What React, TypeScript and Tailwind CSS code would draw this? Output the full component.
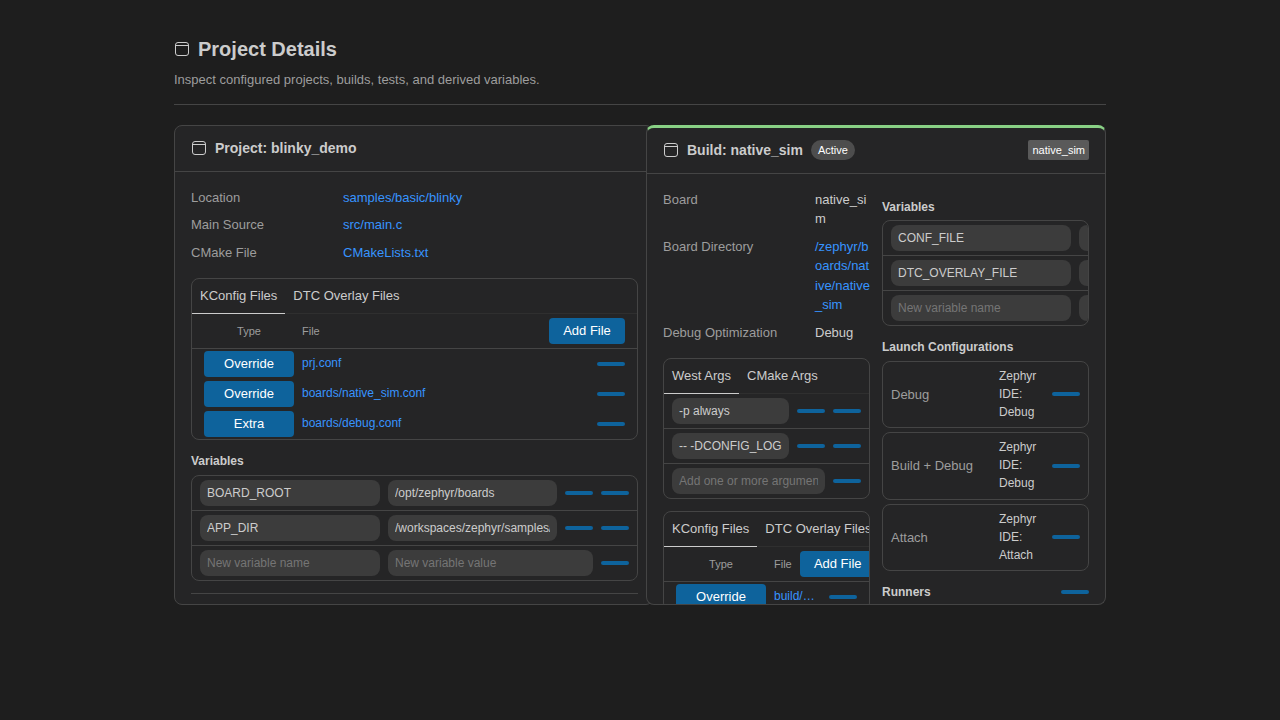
const Icon = ({ className = '' }: { className?: string }) => (
  <svg viewBox="0 0 16 16" fill="none" stroke="#cccccc" strokeWidth="1" className={`w-4 h-4 shrink-0 ${className}`}>
    <rect x="1.5" y="1.5" width="13" height="13" rx="2.5" />
    <path d="M1.5 4.5h13" />
  </svg>
);

const Dash = ({ className = '' }: { className?: string }) => (
  <button className={`block w-7 h-1 shrink-0 rounded-sm bg-[#0e639c] ${className}`} />
);

const Field = ({ value, placeholder, className = '' }: { value?: string; placeholder?: string; className?: string }) => (
  <input
    readOnly
    value={value ?? ''}
    placeholder={placeholder}
    className={`h-[26px] shrink-0 rounded-lg bg-[#3c3c3c] px-[7px] text-xs text-[#cccccc] placeholder:text-[#757575] outline-none ${className}`}
  />
);

const Heading = ({ children, className = '' }: { children: React.ReactNode; className?: string }) => (
  <div className={`text-xs font-bold leading-[18px] text-[#cccccc] ${className}`}>{children}</div>
);

const Tabs = ({ first, second }: { first: string; second: string }) => (
  <div className="flex h-[35px] border-b border-[#2f2f2f] text-[13px] text-[#cccccc] whitespace-nowrap">
    <div className="h-[35px] px-2 leading-[33px] border-b border-[#cccccc]">{first}</div>
    <div className="px-2 leading-[33px]">{second}</div>
  </div>
);

const AddFile = () => (
  <button className="h-[26px] w-[76px] shrink-0 rounded bg-[#0e639c] text-[13px] text-white">Add File</button>
);

const TypeButton = ({ children }: { children: React.ReactNode }) => (
  <button className="h-[26px] w-[90px] shrink-0 rounded bg-[#0e639c] text-[13px] text-white">{children}</button>
);

const Box = ({ children, className = '' }: { children: React.ReactNode; className?: string }) => (
  <div className={`rounded-lg border border-[#454545] overflow-hidden ${className}`}>{children}</div>
);

const Row = ({ children, last }: { children: React.ReactNode; last?: boolean }) => (
  <div className={`flex items-center gap-2 pl-2 ${last ? 'h-[34px]' : 'h-[35px] border-b border-[#454545]'}`}>{children}</div>
);

const files = ['prj.conf', 'boards/native_sim.conf', 'boards/debug.conf'];
const types = ['Override', 'Override', 'Extra'];

const launch = [
  { name: 'Debug', value: 'Zephyr IDE: Debug', nudge: 'mb-[1.5px]' },
  { name: 'Build + Debug', value: 'Zephyr IDE: Debug', nudge: 'mb-[2.5px]' },
  { name: 'Attach', value: 'Zephyr IDE: Attach', nudge: 'mb-[0.5px]' },
];

export default function App() {
  return (
    <div className="h-[720px] overflow-hidden bg-[#1e1e1e] font-['Liberation_Sans',Arial,sans-serif] text-[13px] text-[#cccccc]">
      <div className="w-[932px] ml-[174px] pt-[35px]">
        <div className="flex items-center gap-2 h-[27px]">
          <Icon />
          <h1 className="text-xl font-bold text-[#cccccc]">Project Details</h1>
        </div>
        <p className="mt-2 leading-[19.5px] text-[#9d9d9d]">Inspect configured projects, builds, tests, and derived variables.</p>
        <div className="mt-[14px] border-t border-[#454545]" />

        <div className="flex mt-5">
          {/* project card */}
          <section className="w-[480px] h-[480px] shrink-0 rounded-lg border border-[#454545] bg-[#252526] overflow-hidden">
            <header className="flex items-center gap-2 h-[46px] px-4 border-b border-[#454545]">
              <Icon />
              <h2 className="text-sm font-bold">Project: blinky_demo</h2>
            </header>
            <div className="px-4 pt-4">
              <dl className="grid grid-cols-[152px_1fr] gap-y-2 leading-[19.5px]">
                <dt className="text-[#9d9d9d]">Location</dt>
                <dd className="text-[#3794ff]">samples/basic/blinky</dd>
                <dt className="text-[#9d9d9d]">Main Source</dt>
                <dd className="text-[#3794ff]">src/main.c</dd>
                <dt className="text-[#9d9d9d]">CMake File</dt>
                <dd className="text-[#3794ff]">CMakeLists.txt</dd>
              </dl>

              <Box className="mt-4 w-[447px]">
                <Tabs first="KConfig Files" second="DTC Overlay Files" />
                <div className="flex items-center h-[35px] pl-3 pr-3 border-b border-[#454545] text-[11px] text-[#9d9d9d]">
                  <div className="w-[90px] text-center">Type</div>
                  <div className="ml-2 flex-1">File</div>
                  <AddFile />
                </div>
                <div className="flex flex-col gap-1 py-0.5 pl-3 pr-3">
                  {files.map((file, i) => (
                    <div key={file} className="flex items-center gap-2 h-[26px]">
                      <TypeButton>{types[i]}</TypeButton>
                      <a className="flex-1 text-xs text-[#3794ff] -mt-0.5">{file}</a>
                      <Dash />
                    </div>
                  ))}
                </div>
              </Box>

              <Heading className="mt-3 mb-[5px]">Variables</Heading>
              <Box className="w-[447px]">
                <Row>
                  <Field value="BOARD_ROOT" className="w-[180px]" />
                  <Field value="/opt/zephyr/boards" className="w-[169px]" />
                  <Dash />
                  <Dash />
                </Row>
                <Row>
                  <Field value="APP_DIR" className="w-[180px]" />
                  <Field value="/workspaces/zephyr/samples/basic/blinky" className="w-[169px]" />
                  <Dash />
                  <Dash />
                </Row>
                <Row last>
                  <Field placeholder="New variable name" className="w-[180px]" />
                  <Field placeholder="New variable value" className="w-[205px]" />
                  <Dash />
                </Row>
              </Box>
              <div className="mt-3 w-[447px] border-t border-[#454545]" />
            </div>
          </section>

          {/* build card */}
          <section className="relative z-10 -ml-2 w-[460px] h-[480px] shrink-0 rounded-lg border border-[#454545] border-t-[3px] border-t-[#89d185] bg-[#252526] overflow-hidden">
            <header className="flex items-center h-[46px] px-4 border-b border-[#454545]">
              <Icon />
              <h2 className="ml-2 text-sm font-bold">Build: native_sim</h2>
              <span className="ml-2 h-5 px-[7px] rounded-full bg-[#4d4d4d] text-[11px] leading-5 text-white">Active</span>
              <span className="ml-auto h-5 px-1 rounded-[2px] bg-[#5a5a5a] text-[11px] leading-5 text-white">native_sim</span>
            </header>
            <div className="grid grid-cols-[207px_207px] gap-x-3 px-4 pt-4">
              <div className="min-w-0">
                <dl className="grid grid-cols-[152px_55px] gap-y-2 leading-[19.5px]">
                  <dt className="text-[#9d9d9d]">Board</dt>
                  <dd className="break-all">native_sim</dd>
                  <dt className="text-[#9d9d9d]">Board Directory</dt>
                  <dd className="break-all text-[#3794ff]">/zephyr/boards/native/native_sim</dd>
                  <dt className="text-[#9d9d9d]">Debug Optimization</dt>
                  <dd>Debug</dd>
                </dl>

                <Box className="mt-4">
                  <Tabs first="West Args" second="CMake Args" />
                  <Row>
                    <Field value="-p always" className="w-[117px]" />
                    <Dash />
                    <Dash />
                  </Row>
                  <Row>
                    <Field value="-- -DCONFIG_LOG=y" className="w-[117px]" />
                    <Dash />
                    <Dash />
                  </Row>
                  <Row last>
                    <Field placeholder="Add one or more arguments" className="w-[153px]" />
                    <Dash />
                  </Row>
                </Box>

                <Box className="mt-3">
                  <Tabs first="KConfig Files" second="DTC Overlay Files" />
                  <div className="flex items-center h-[35px] pl-3 border-b border-[#454545] text-[11px] text-[#9d9d9d]">
                    <div className="w-[90px] text-center shrink-0">Type</div>
                    <div className="ml-2 shrink-0">File</div>
                    <div className="ml-2">
                      <AddFile />
                    </div>
                  </div>
                  <div className="flex items-center pt-0.5 pl-3 pr-3">
                    <TypeButton>Override</TypeButton>
                    <a className="ml-2 w-[55px] text-xs text-[#3794ff] -mt-0.5">build/…</a>
                    <Dash />
                  </div>
                </Box>
              </div>

              <div className="min-w-0">
                <Heading className="mt-2 mb-1">Variables</Heading>
                <Box>
                  <Row>
                    <Field value="CONF_FILE" className="w-[180px]" />
                    <Field className="w-[100px]" />
                  </Row>
                  <Row>
                    <Field value="DTC_OVERLAY_FILE" className="w-[180px]" />
                    <Field className="w-[100px]" />
                  </Row>
                  <Row last>
                    <Field placeholder="New variable name" className="w-[180px]" />
                    <Field className="w-[100px]" />
                  </Row>
                </Box>

                <Heading className="mt-3 mb-[5px]">Launch Configurations</Heading>
                <div className="flex flex-col gap-1">
                  {launch.map((item) => (
                    <div key={item.name} className="flex items-center h-[67.5px] pl-2 pr-2 rounded-lg border border-[#454545]">
                      <div className="w-[108px] shrink-0 text-[#9d9d9d]">{item.name}</div>
                      <div className={`w-[53px] shrink-0 text-xs leading-[18px] ${item.nudge}`}>{item.value}</div>
                      <Dash />
                    </div>
                  ))}
                </div>

                <div className="flex items-center justify-between mt-3">
                  <Heading>Runners</Heading>
                  <Dash />
                </div>
              </div>
            </div>
          </section>
        </div>
      </div>
    </div>
  );
}
